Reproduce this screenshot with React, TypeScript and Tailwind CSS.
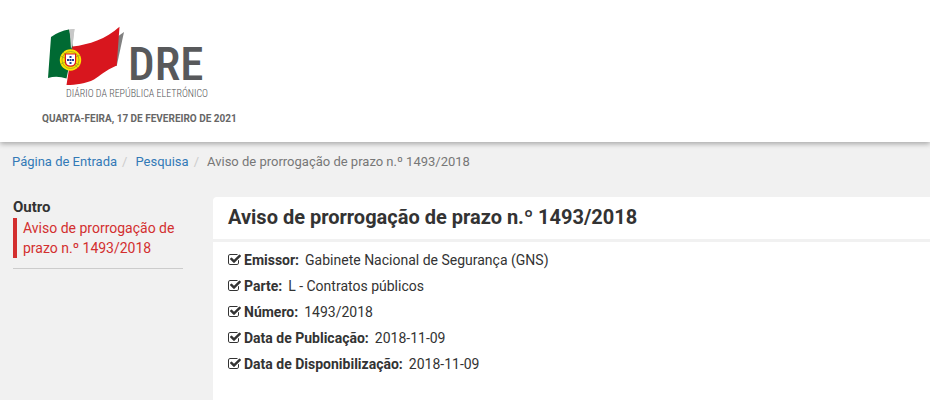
type Field = {
  label: string;
  value: string;
};

const title = "Aviso de prorrogação de prazo n.º 1493/2018";

const fields: Field[] = [
  { label: "Emissor:", value: "Gabinete Nacional de Segurança (GNS)" },
  { label: "Parte:", value: "L - Contratos públicos" },
  { label: "Número:", value: "1493/2018" },
  { label: "Data de Publicação:", value: "2018-11-09" },
  { label: "Data de Disponibilização:", value: "2018-11-09" },
];

function Logo() {
  return (
    <svg
      width="170"
      height="76"
      viewBox="0 0 170 76"
      role="img"
      aria-label="DRE - Diário da República Eletrónico"
    >
      {/* folds behind the flag */}
      <path d="M22 4.500 L28.500 4 L26 24 L20 30Z" fill="#c8c8c8" />
      <path d="M71 12 L78 7 L70.700 41 L66 41Z" fill="#808080" />
      {/* flag */}
      <path d="M5 12 Q13 6 23 4.500 L27 22 L20.500 53.500 Q11 50.500 2 53Z" fill="#006a33" />
      <path d="M23.500 4.500 L28.500 4 L26.500 21 L25 24Z" fill="#c8c8c8" />
      <path
        d="M26.500 21.500 C43 19.500 60 14 73.500 1.700 L70.700 40.500 C59 45.500 54 51 48 54.500 C40 58.500 30 60 20.500 60Z"
        fill="#d8161e"
      />
      {/* armillary sphere and shield */}
      <circle cx="24.500" cy="35" r="10.700" fill="#fce300" />
      <circle cx="24.500" cy="35" r="8.500" fill="none" stroke="#8f9c1c" strokeWidth="0.700" />
      <path
        d="M15 31 Q24 36 33.500 40 M15 39 Q24 35 34 30 M17 27 L32 43"
        stroke="#8f9c1c"
        strokeWidth="0.700"
        fill="none"
      />
      <path d="M18.800 28.500 H30.200 V36 Q30.200 41.800 24.500 41.800 Q18.800 41.800 18.800 36Z" fill="#d8161e" />
      <path d="M20 29.500 H29 V36 Q29 40.600 24.500 40.600 Q20 40.600 20 36Z" fill="#fff" />
      <g fill="#1c3f94">
        <rect x="23.500" y="31" width="2" height="2" />
        <rect x="21" y="34" width="2" height="2" />
        <rect x="23.500" y="34" width="2" height="2" />
        <rect x="26" y="34" width="2" height="2" />
        <rect x="23.500" y="37" width="2" height="2" />
      </g>
      <text
        x="82"
        y="55"
        fontSize="47"
        fill="#58595b"
        className="font-['Roboto_Condensed','Liberation_Sans_Narrow','Roboto',sans-serif] font-medium"
      >
        DRE
      </text>
      <text
        x="20"
        y="72"
        fontSize="10"
        fill="#505154"
        className="font-['Roboto_Condensed','Liberation_Sans_Narrow','Roboto',sans-serif] font-light"
      >
        DIÁRIO DA REPÚBLICA ELETRÓNICO
      </text>
    </svg>
  );
}

function CheckIcon() {
  return (
    <svg
      viewBox="64 0 1664 1792"
      className="h-[14px] w-[13px] shrink-0"
      fill="currentColor"
      aria-hidden="true"
    >
      <path d="M1472 930v318q0 119-84.5 203.5t-203.5 84.500h-832q-119 0-203.500-84.500t-84.500-203.500v-832q0-119 84.500-203.500t203.500-84.500h832q63 0 117 25 15 7 18 23 3 17-9 29l-49 49q-10 10-23 10-3 0-9-2-23-6-45-6h-832q-66 0-113 47t-47 113v832q0 66 47 113t113 47h832q66 0 113-47t47-113v-254q0-13 9-22l64-64q10-10 23-10 6 0 12 3 20 8 20 29zm231-489l-814 814q-24 24-57 24t-57-24l-430-430q-24-24-24-57t24-57l110-110q24-24 57-24t57 24l263 263 647-647q24-24 57-24t57 24l110 110q24 24 24 57t-24 57z" />
    </svg>
  );
}

function Breadcrumb() {
  return (
    <nav aria-label="Breadcrumb" className="px-3 pt-[10px]">
      <ol className="flex flex-wrap text-[13px] leading-5 text-[#777]">
        <li>
          <a href="#inicio" className="text-[#337ab7]">
            Página de Entrada
          </a>
          <span className="px-[5px] text-[#ccc]">/</span>
        </li>
        <li className="pl-[3px]">
          <a href="#pesquisa" className="text-[#337ab7]">
            Pesquisa
          </a>
          <span className="px-[5px] text-[#ccc]">/</span>
        </li>
        <li className="pl-[3px]">{title}</li>
      </ol>
    </nav>
  );
}

export default function App() {
  return (
    <div className="flex min-h-screen flex-col bg-[#f1f1f1] font-['Roboto',sans-serif] text-sm text-[#333]">
      <header className="bg-white pt-[25px] pb-[16px] shadow-[0_2px_5px_rgba(0,0,0,0.3)]">
        <a href="#inicio" className="ml-[46px] block w-fit">
          <Logo />
        </a>
        <p className="mt-[11px] ml-[42px] text-[10px] leading-[14px] font-bold text-[#666] uppercase">
          Quarta-feira, 17 de fevereiro de 2021
        </p>
      </header>

      <Breadcrumb />

      <div className="flex grow gap-[30px] pt-[25px] pl-[13px]">
        <aside className="w-[170px] shrink-0">
          <div className="border-b border-[#ccc] pb-[10px]">
            <h2 className="text-[15px] leading-[21px] font-bold">Outro</h2>
            <a
              href="#aviso"
              className="block border-l-4 border-[#d32f2f] pl-[6px] leading-5 text-[#d32f2f]"
            >
              {title}
            </a>
          </div>
        </aside>

        <main className="min-w-0 grow rounded-tl bg-white">
          <h1 className="border-b-3 border-[#f1f1f1] px-[15px] pt-[7px] pb-[9px] text-xl leading-[26px] font-bold">
            {title}
          </h1>
          <ul className="px-[15px] pt-[5px]">
            {fields.map((field) => (
              <li key={field.label} className="flex items-center leading-[26px]">
                <CheckIcon />
                <strong className="ml-[3px] font-bold">{field.label}</strong>
                <span className="ml-[6px]">{field.value}</span>
              </li>
            ))}
          </ul>
        </main>
      </div>
    </div>
  );
}
